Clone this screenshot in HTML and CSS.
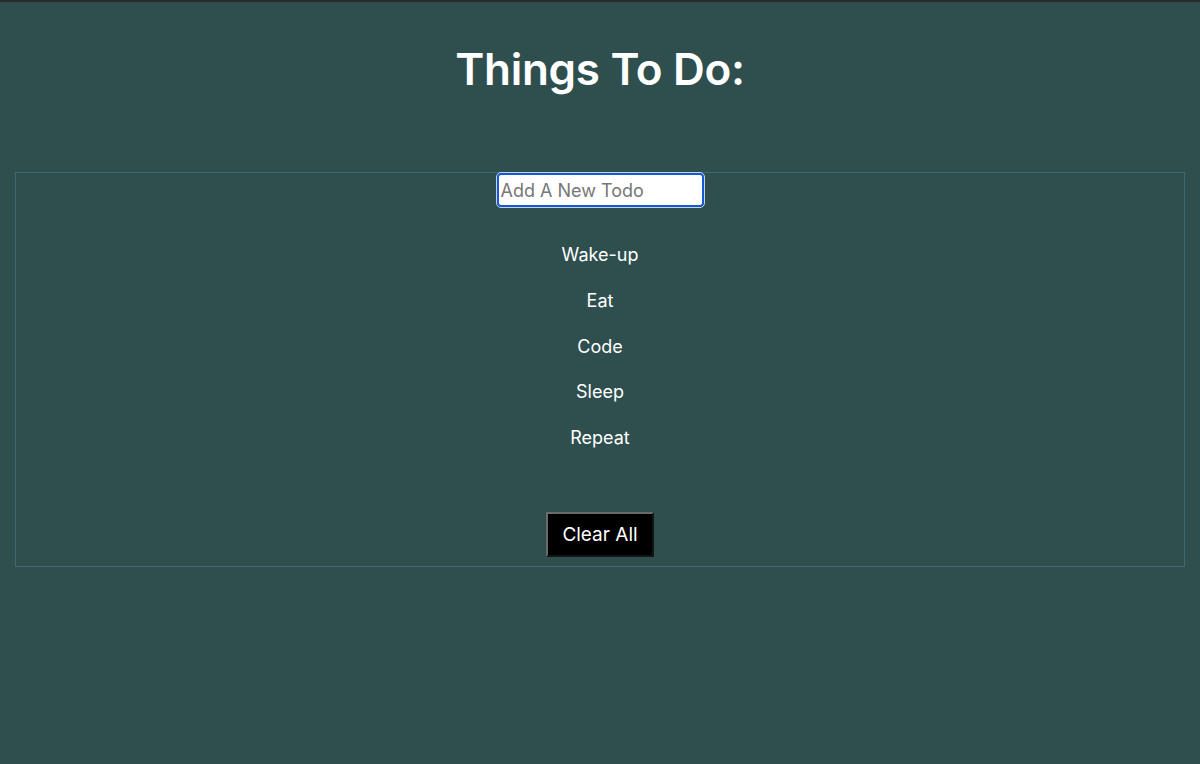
FILE: index.html
```html
<!DOCTYPE html>
<html>
<head>
<meta charset="utf-8">
<link rel="stylesheet" href="styles.css">
</head>
<body>
<div class="topbar"></div>
<h1 class="title">Things To Do:</h1>
<div class="box">
  <input class="new-todo" type="text" placeholder="Add A New Todo">
  <ul class="list">
    <li>Wake-up</li>
    <li>Eat</li>
    <li>Code</li>
    <li>Sleep</li>
    <li>Repeat</li>
  </ul>
  <button class="clear">Clear All</button>
</div>
</body>
</html>
```

FILE: styles.css
```css
html, body {
  margin: 0;
  padding: 0;
  background: #2f4f4f;
  font-family: Inter, "Liberation Sans", sans-serif;
  color: #ffffff;
}
.topbar {
  height: 2px;
  background: #2b2b2b;
}
.title {
  margin: 0;
  padding-top: 40px;
  text-align: center;
  font-size: 44px;
  font-weight: 600;
  line-height: 54px;
  letter-spacing: -0.3px;
}
.box {
  margin: 76px 15px 0 15px;
  border: 1px solid #3b6a6c;
  display: flex;
  flex-direction: column;
  align-items: center;
  padding-bottom: 9px;
}
.new-todo {
  box-sizing: border-box;
  width: 207px;
  height: 34px;
  margin: 0;
  border: 2px solid #1458d6;
  border-radius: 4px;
  outline: 1px solid #c7d3ea;
  outline-offset: 0;
  background: #fff;
  font-family: Inter, "Liberation Sans", sans-serif;
  font-size: 18px;
  padding: 0 2px;
  color: #222;
}
.new-todo::placeholder {
  color: #777;
}
.list {
  list-style: none;
  margin: 37px 0 0 0;
  padding: 0;
  text-align: center;
}
.list li {
  font-size: 18px;
  font-weight: 400;
  line-height: 22px;
  height: 45.75px;
}
.clear {
  margin-top: 39px;
  width: 108px;
  height: 45px;
  background: #000;
  color: #fff;
  border: 2px outset #6a6a6a;
  font-family: Inter, "Liberation Sans", sans-serif;
  font-size: 19px;
  font-weight: 400;
  padding: 0;
}
```
